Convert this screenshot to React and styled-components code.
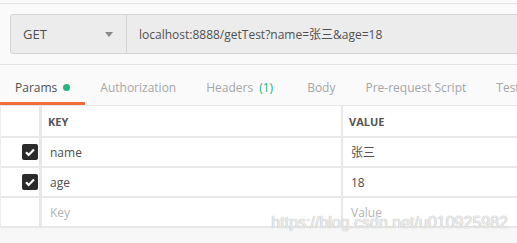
import React from "react";
import styled, { createGlobalStyle } from "styled-components";

const Global = createGlobalStyle`
  body {
    margin: 0;
    background: #fafafa;
    font-family: "Open Sans", "Noto Sans CJK SC", sans-serif;
  }
`;

const params = [
  { key: "name", value: "张三", on: true },
  { key: "age", value: "18", on: true },
];

export default function App() {
  return (
    <Page>
      <Global />
      <RequestBar>
        <UrlBox>
          <Method>
            <span>GET</span>
            <Caret />
          </Method>
          <UrlText>localhost:8888/getTest?name=张三&amp;age=18</UrlText>
        </UrlBox>
      </RequestBar>
      <Tabs>
        <Tab active>
          Params <Dot />
        </Tab>
        <Tab>Authorization</Tab>
        <Tab>
          Headers <Count>(1)</Count>
        </Tab>
        <Tab>Body</Tab>
        <Tab>Pre-request Script</Tab>
        <Tab>Tests</Tab>
      </Tabs>
      <Table>
        <Row header>
          <Check />
          <Cell header>KEY</Cell>
          <Cell header last>VALUE</Cell>
        </Row>
        {params.map((p) => (
          <Row key={p.key}>
            <Check>
              {p.on && (
                <Box>
                  <svg width="16" height="16" viewBox="0 0 16 16">
                    <path d="M4 8.3l2.6 2.6L12 5.4" fill="none" stroke="#fff" strokeWidth="2.2" />
                  </svg>
                </Box>
              )}
            </Check>
            <Cell>{p.key}</Cell>
            <Cell last>{p.value}</Cell>
          </Row>
        ))}
        <Row>
          <Check />
          <Cell placeholder>Key</Cell>
          <Cell placeholder last>Value</Cell>
        </Row>
      </Table>
      <Footer>
        <Watermark>https://blog.csdn.net/u010925982</Watermark>
      </Footer>
    </Page>
  );
}

const Page = styled.div`
  width: 517px;
  height: 243px;
  overflow: hidden;
  position: relative;
  padding-top: 3px;
  box-sizing: border-box;
  background: #fafafa;
`;

const RequestBar = styled.div`
  border-top: 1px solid #e3e3e3;
  border-bottom: 1px solid #e3e3e3;
  padding: 10px 0 10px 10px;
`;

const UrlBox = styled.div`
  display: flex;
  height: 40px;
  box-sizing: border-box;
  width: 600px;
  background: #ececec;
  border: 1px solid #d4d4d4;
  border-radius: 3px;
`;

const Method = styled.div`
  width: 116px;
  box-sizing: border-box;
  border-right: 1px solid #d4d4d4;
  display: flex;
  align-items: center;
  justify-content: space-between;
  padding: 0 13px 0 12px;
  font-size: 13px;
  color: #505050;
`;

const Caret = styled.div`
  width: 0;
  height: 0;
  border-left: 4px solid transparent;
  border-right: 4px solid transparent;
  border-top: 5px solid #888;
`;

const UrlText = styled.div`
  display: flex;
  align-items: center;
  padding-left: 12px;
  font-size: 12px;
  color: #505050;
`;

const Tabs = styled.div`
  display: flex;
  height: 41px;
  box-sizing: border-box;
  border-bottom: 1px solid #e6e6e6;
  white-space: nowrap;
`;

const Tab = styled.div`
  display: flex;
  align-items: center;
  gap: 6px;
  padding: 8px 15px 0;
  height: 40px;
  box-sizing: border-box;
  font-size: 12px;
  color: ${(p) => (p.active ? "#505050" : "#a6a6a6")};
  border-bottom: 3px solid ${(p) => (p.active ? "#f26b3a" : "transparent")};
`;

const Dot = styled.span`
  width: 7px;
  height: 7px;
  border-radius: 50%;
  background: #26b47f;
`;

const Count = styled.span`
  color: #26b47f;
  margin-right: 4px;
`;

const Table = styled.div`
  background: #fff;
  border-left: 1px solid #ececec;
`;

const Row = styled.div`
  display: flex;
  height: ${(p) => (p.header ? "32px" : "30px")};
  box-sizing: border-box;
  border-bottom: 2px solid #e8e8e8;
`;

const Check = styled.div`
  width: 41px;
  box-sizing: border-box;
  border-right: 3px solid #e8e8e8;
  display: flex;
  align-items: center;
  justify-content: flex-end;
  padding: 0 1px 0 0;
`;

const Box = styled.div`
  width: 16px;
  height: 16px;
  border-radius: 2px;
  background: #2b2b2b;
  display: flex;
`;

const Cell = styled.div`
  display: flex;
  align-items: center;
  box-sizing: border-box;
  ${(p) => (p.last ? "flex: 1;" : "width: 301px; border-right: 2px solid #e8e8e8;")}
  padding-left: ${(p) => (p.header ? "6px" : "8px")};
  font-size: ${(p) => (p.header ? "11px" : "12px")};
  font-weight: ${(p) => (p.header ? 700 : 400)};
  color: ${(p) => (p.header ? "#555" : p.placeholder ? "#b3b3b3" : "#505050")};
`;

const Footer = styled.div`
  height: 20px;
  background: #f7f7f7;
`;

const Watermark = styled.div`
  position: absolute;
  right: 9px;
  top: 214px;
  font-family: "Liberation Sans", sans-serif;
  font-size: 16px;
  color: rgba(255, 255, 255, 0.7);
  text-shadow: 0 0 1px #bdbdbd, 0 0 1px #bdbdbd;
`;
